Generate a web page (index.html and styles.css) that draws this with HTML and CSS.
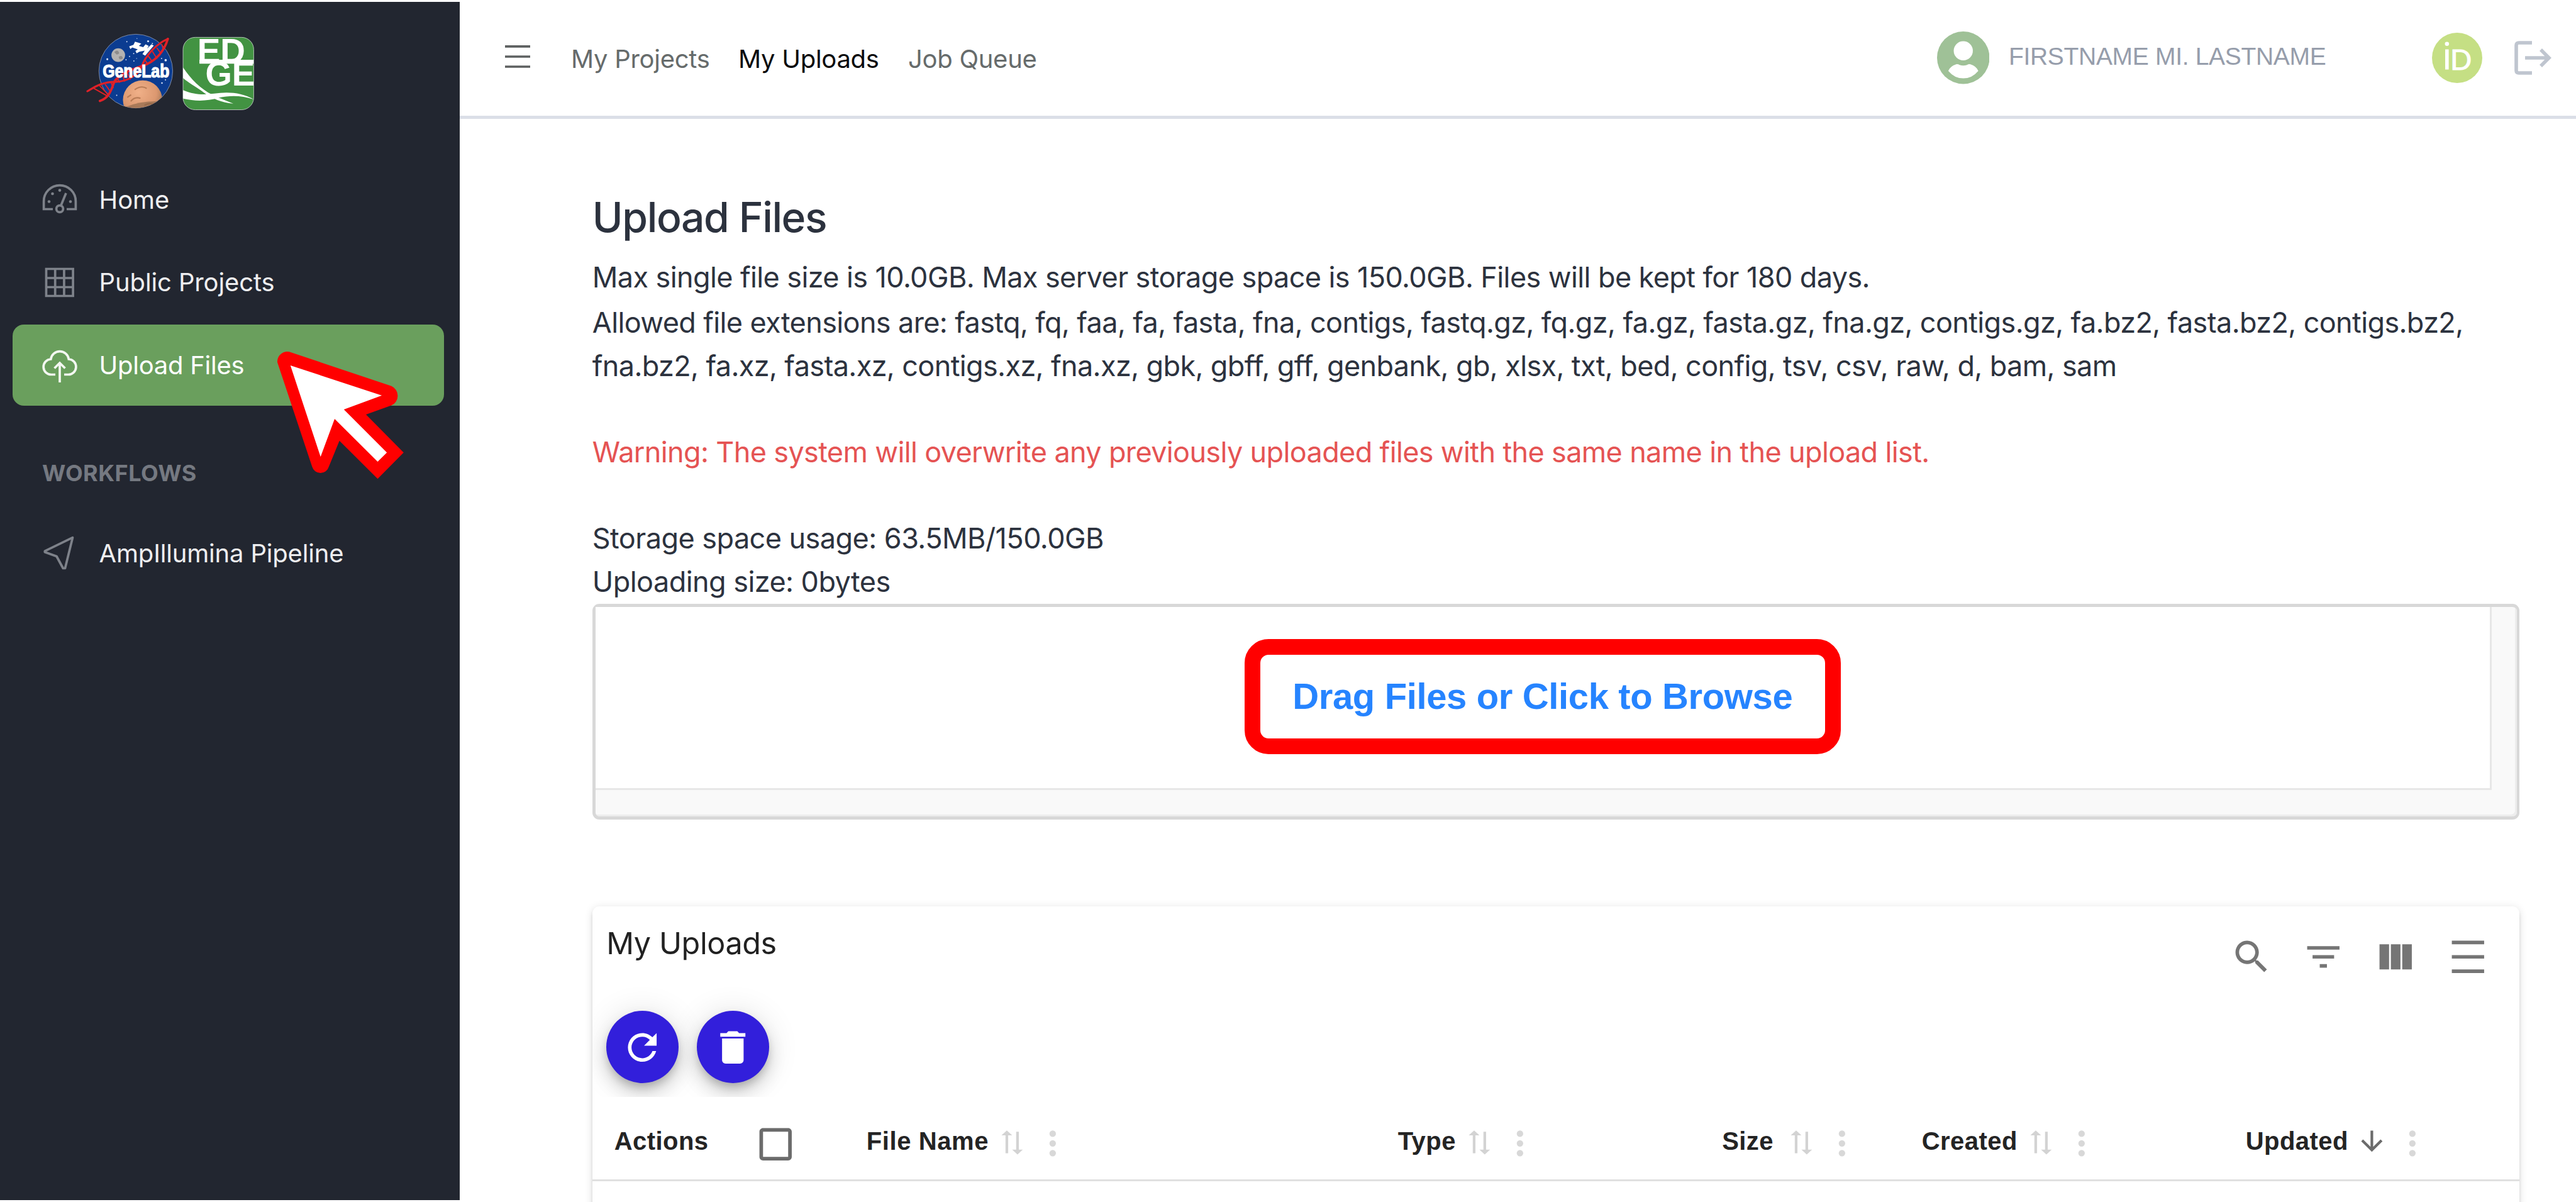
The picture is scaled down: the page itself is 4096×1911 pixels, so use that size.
FILE: index.html
```html
<!DOCTYPE html>
<html lang="en">
<head>
<meta charset="utf-8">
<title>Upload Files</title>
<link rel="stylesheet" href="styles.css">
</head>
<body>
<svg class="defs" aria-hidden="true">
  <symbol id="sort" viewBox="0 0 24 24"><g transform="rotate(-90 12 12)"><path transform="translate(12 12) scale(.9 1) translate(-12 -12)" d="m18 12 4-4-4-4v3H3v2h15zM6 12l-4 4 4 4v-3h15v-2H6z"/></g></symbol>
  <symbol id="dots" viewBox="0 0 24 24"><circle cx="12" cy="6" r="2"/><circle cx="12" cy="12" r="2"/><circle cx="12" cy="18" r="2"/></symbol>
</svg>
<div class="app">
  <aside class="sidebar">
    <div class="brand">
      <svg class="logos" viewBox="0 0 990 480">
        <defs>
          <clipPath id="disc"><circle cx="306" cy="245" r="189"/></clipPath>
          <clipPath id="tile"><rect x="548" y="72" width="362" height="371" rx="62"/></clipPath>
          <radialGradient id="mars" cx=".4" cy=".3" r=".75"><stop offset="0" stop-color="#f0b088"/><stop offset=".6" stop-color="#dc9870"/><stop offset="1" stop-color="#8e6a4c"/></radialGradient>
        </defs>
        <circle cx="306" cy="245" r="189" fill="#0b3c91" stroke="#8790a6" stroke-width="3"/>
        <g clip-path="url(#disc)"><circle cx="341" cy="393" r="101" fill="url(#mars)"/><path d="M280 400q20-26 50-16M300 340q36-24 62-6M350 420q30-18 60 0M262 380l20-14" stroke="#b87b55" stroke-width="7" fill="none"/><path d="M250 430q80-34 190-30v50H250z" fill="#7c5c42" opacity=".55"/></g>
        <circle cx="216" cy="163" r="35" fill="#b4b2b1"/><path d="M196 148q14-14 22-2t-10 14zM218 172q16-10 20 2t-16 10z" fill="#8d8b8a"/>
        <g fill="#dfe8fb"><circle cx="160" cy="184" r="5"/><circle cx="260" cy="94" r="3"/><circle cx="312" cy="78" r="2"/><circle cx="369" cy="92" r="5"/><circle cx="391" cy="104" r="3"/><circle cx="256" cy="187" r="3"/><circle cx="295" cy="155" r="3"/><circle cx="274" cy="170" r="3"/><circle cx="296" cy="193" r="3"/><circle cx="459" cy="189" r="6"/><circle cx="438" cy="180" r="3"/><circle cx="208" cy="369" r="3"/><circle cx="440" cy="306" r="4"/><circle cx="458" cy="290" r="3"/><circle cx="310" cy="180" r="2"/></g>
        <g fill="#fff"><path d="M272 118l22-8 8-16 32 10-12 12 22 6 12-14 16 8-8 14 22-22 12 6-44 52-14-8 12-18-28 6-14 8-6-12 12-8-28-10-10 8z"/></g>
        <g fill="none" stroke="#e02128" stroke-linecap="round"><path d="M470 80C400 110 350 180 338 218S270 300 200 300 90 330 58 348" stroke-width="10"/><path d="M470 80C450 150 400 200 340 218S210 270 196 300 176 380 122 398" stroke-width="12"/><path d="M440 110l6 20M415 128l18 24M392 146l22 34M370 168l20 28M354 190l14 20M320 226l8 14M290 236l18 24M262 250l16 36M238 262l10 34M212 282l10 20M180 306l10 24M150 314l26 36M122 322l40 40M92 334l64 36" stroke-width="6"/></g>
        <text class="logo-gene" x="136" y="278" textLength="342" lengthAdjust="spacingAndGlyphs">GeneLab</text>
        <rect x="548" y="72" width="362" height="371" rx="62" fill="#429342" stroke="#b9c9bb" stroke-width="3"/>
        <g clip-path="url(#tile)" fill="#fff">
          <path d="M548 226c40 60 90 110 150 140 34 18 70 30 108 46-60-6-110-26-150-56-44-34-82-52-108-76z"/>
          <path d="M548 342c60 26 110 24 160 18 70-10 140-6 202 30-60-20-120-22-180-8-60 18-120 18-182 4z"/>
          <text class="logo-edge" x="621" y="202" textLength="246" lengthAdjust="spacingAndGlyphs">ED</text>
          <rect x="632" y="187" width="278" height="20"/>
          <text class="logo-edge" x="662" y="320" textLength="254" lengthAdjust="spacingAndGlyphs">GE</text>
        </g>
      </svg>
    </div>
    <nav class="menu">
      <a class="item">
        <svg class="mi" viewBox="0 0 60 60"><path d="M19 45.500H4.600V33a25.400 25.400 0 0 1 50.800 0v12.500H41"/><circle cx="30" cy="45" r="5.400"/><path d="M32 39.500L40 20"/><g class="fill"><circle cx="30" cy="15.600" r="2.300"/><circle cx="18.500" cy="21" r="2.300"/><circle cx="13" cy="33.500" r="2.300"/><circle cx="47" cy="33.500" r="2.300"/></g></svg>
        <span>Home</span></a>
      <a class="item">
        <svg class="mi" viewBox="0 0 60 60"><path d="M8.500 8.500h42.600v43H8.500zM22.700 8.500v43M36.900 8.500v43M8.500 23h42.600M8.500 37.500h42.600"/></svg>
        <span>Public Projects</span></a>
      <a class="item active">
        <svg class="mi" viewBox="0 0 60 60"><path d="M23 44.500H17A12.200 12.200 0 0 1 15.800 20a14.400 14.400 0 0 1 28.500 0A12.200 12.200 0 0 1 43 44.500h-6M30 57V26M21.500 34.500L30 26l8.500 8.500"/></svg>
        <span class="tight">Upload Files</span></a>
    </nav>
    <div class="section">WORKFLOWS</div>
    <nav class="menu">
      <a class="item">
        <svg class="mi" viewBox="0 0 60 60"><path d="M50.500 5.700L38.500 54.500h-3.200L25 35.500 6.300 28.700v-1.500z" stroke-linejoin="round"/></svg>
        <span class="snug">AmpIllumina Pipeline</span></a>
    </nav>
  </aside>

  <main class="main">
    <header class="topbar">
      <svg class="burger" viewBox="0 0 40 36"><path d="M0 1.900h40M0 18h40M0 34h40"/></svg>
      <a class="link">My Projects</a>
      <a class="link current">My Uploads</a>
      <a class="link">Job Queue</a>
      <div class="user">
        <svg class="avatar" viewBox="0 0 84 84"><circle cx="42" cy="42" r="42" fill="#9fc197"/><circle cx="42" cy="31" r="15.300" fill="#fff"/><path d="M30.500 52.500q3.500-.4 5.500 1 6 2 12 0 2-1.400 5.500-1Q63 55.500 66 63 56 75 42 75T18 63q3-7.500 12.500-10.500z" fill="#fff"/></svg>
        <span class="name">FIRSTNAME MI. LASTNAME</span>
        <svg class="orcid" viewBox="0 0 80 80"><circle cx="40" cy="40" r="40" fill="#c5df84"/><circle cx="23.800" cy="17.800" r="3.300" fill="#fff"/><rect x="21" y="26.500" width="5.600" height="32" fill="#fff"/><text class="orcid-d" x="29" y="58.500">D</text></svg>
        <svg class="logout" viewBox="0 0 60 54"><path d="M29 3H8Q4 3 4 7v40q0 4 4 4h21" /><path d="M18 27h38M43 14l13 13-13 13"/></svg>
      </div>
    </header>

    <section class="content">
      <h1>Upload Files</h1>
      <p class="info first">Max single file size is 10.0GB. Max server storage space is 150.0GB. Files will be kept for 180 days.</p>
      <p class="info types">Allowed file extensions are: fastq, fq, faa, fa, fasta, fna, contigs, fastq.gz, fq.gz, fa.gz, fasta.gz, fna.gz, contigs.gz, fa.bz2, fasta.bz2, contigs.bz2,<br>fna.bz2, fa.xz, fasta.xz, contigs.xz, fna.xz, gbk, gbff, gff, genbank, gb, xlsx, txt, bed, config, tsv, csv, raw, d, bam, sam</p>
      <p class="info warning">Warning: The system will overwrite any previously uploaded files with the same name in the upload list.</p>
      <p class="info usage">Storage space usage: 63.5MB/150.0GB<br>Uploading size: 0bytes</p>

      <div class="dropzone"><div class="drop-inner"><div class="callout">Drag Files or Click to Browse</div></div></div>

      <div class="card">
        <div class="toolbar">
          <div class="toolbar-left">
            <h2>My Uploads</h2>
            <div class="actions">
              <button class="fab"><svg class="ic" viewBox="0 0 24 24"><path d="M17.650 6.350C16.200 4.900 14.210 4 12 4c-4.420 0-7.990 3.580-7.990 8s3.570 8 7.990 8c3.730 0 6.840-2.550 7.730-6h-2.080c-.82 2.330-3.040 4-5.650 4-3.310 0-6-2.690-6-6s2.690-6 6-6c1.660 0 3.140.69 4.220 1.780L13 11h7V4l-2.350 2.350z"/></svg></button>
              <button class="fab"><svg class="ic" viewBox="0 0 24 24"><path d="M6 19c0 1.100.9 2 2 2h8c1.100 0 2-.9 2-2V7H6v12zM19 4h-3.500l-1-1h-5l-1 1H5v2h14V4z"/></svg></button>
            </div>
          </div>
          <div class="tools">
            <svg class="ic" viewBox="0 0 24 24"><path d="M15.500 14h-.79l-.28-.27C15.410 12.590 16 11.110 16 9.500 16 5.910 13.090 3 9.500 3S3 5.910 3 9.500 5.910 16 9.500 16c1.610 0 3.090-.59 4.230-1.570l.27.28v.79l5 4.990L20.490 19l-4.990-5zm-6 0C7.010 14 5 11.990 5 9.500S7.010 5 9.500 5 14 7.010 14 9.500 11.990 14 9.500 14z"/></svg>
            <svg class="ic" viewBox="0 0 24 24"><path d="M10 18h4v-2h-4v2zM3 6v2h18V6H3zm3 7h12v-2H6v2z"/></svg>
            <svg class="ic" viewBox="0 0 24 24"><path d="M14.670 5v14H9.330V5h5.340zm1 14H21V5h-5.330v14zm-7.340 0V5H3v14h5.330z"/></svg>
            <svg class="ic" viewBox="0 0 24 24"><path d="M3 3h18v2H3zm0 16h18v2H3zm0-8h18v2H3z"/></svg>
          </div>
        </div>
        <div class="thead">
          <div class="th">Actions</div>
          <div class="th"><svg class="ic check" viewBox="0 0 24 24"><path d="M19 5v14H5V5h14m0-2H5c-1.100 0-2 .9-2 2v14c0 1.100.9 2 2 2h14c1.100 0 2-.9 2-2V5c0-1.100-.9-2-2-2z"/></svg></div>
          <div class="th file">File Name<svg class="sort"><use href="#sort"/></svg><svg class="dots"><use href="#dots"/></svg></div>
          <div class="th">Type<svg class="sort"><use href="#sort"/></svg><svg class="dots"><use href="#dots"/></svg></div>
          <div class="th size">Size<svg class="sort"><use href="#sort"/></svg><svg class="dots"><use href="#dots"/></svg></div>
          <div class="th">Created<svg class="sort"><use href="#sort"/></svg><svg class="dots"><use href="#dots"/></svg></div>
          <div class="th">Updated<svg class="sort down" viewBox="0 0 24 24"><path d="M20 12l-1.410-1.410L13 16.170V4h-2v12.170l-5.580-5.590L4 12l8 8 8-8z"/></svg><svg class="dots"><use href="#dots"/></svg></div>
        </div>
      </div>
    </section>
  </main>

  <svg class="pointer" viewBox="465 595 235 230">
    <path fill="#f00" d="M473.500 618.300A17 17 0 0 1 497 601.700L668.400 659.300A18 18 0 0 1 668.400 692.300L625 707.700 689.300 772.700 644.900 817.700 579.600 752.700 561.500 797A14.800 14.800 0 0 1 533 797z"/>
    <path fill="#fff" d="M495.900 624L652 675.300 587.200 699.300 660.700 772.700 644.900 788.300 571.400 715.300 547.400 780z"/>
  </svg>
</div>
</body>
</html>
```
FILE: styles.css
```css
* { box-sizing: border-box; }

body {
  margin: 0;
  background: #fff;
  font-family: "Inter", "Noto Sans", sans-serif;
  color: #2c323e;
}

h1, h2, p { margin: 0; }
svg { display: block; flex: none; }
.defs { position: absolute; width: 0; height: 0; }

.app {
  position: relative;
  display: flex;
  width: 4096px;
  height: 1911px;
  padding: 3px 0;
  overflow: hidden;
}

/* Sidebar */
.sidebar {
  flex: none;
  width: 731px;
  padding: 0 25.500px 0 20px;
  background: #222630;
}
.brand { height: 249.300px; padding: 34.200px 0 0 101px; }
.logos { width: 307.200px; height: 149px; }
.logo-gene { font: 700 93px "Liberation Sans", sans-serif; fill: #fff; stroke: #fff; stroke-width: 4px; }
.logo-edge { font: 700 176px "Liberation Sans", sans-serif; }

.menu { display: flex; flex-direction: column; gap: 2.700px; }
.item {
  display: flex;
  align-items: center;
  height: 129px;
  padding: 1px 0 0 44.600px;
  border-radius: 18px;
  font-size: 40px;
  line-height: 60px;
  color: #eeeef0;
}
.item.active { background: #6a9f5d; color: #fff; }
.item span { margin: 1px 0 0 33px; letter-spacing: -.12px; white-space: nowrap; }
.item .tight { letter-spacing: -.27px; }
.item .snug { letter-spacing: -.18px; }
.mi {
  width: 60px;
  height: 60px;
  fill: none;
  stroke: #7e828a;
  stroke-width: 3.700px;
}
.mi .fill { fill: #7e828a; stroke: none; }
.active .mi { stroke: #f3f7f1; }
.section {
  height: 100px;
  margin: 57px 0 12.400px;
  padding-left: 47px;
  font-size: 36px;
  font-weight: 700;
  line-height: 100px;
  letter-spacing: .45px;
  color: #757981;
}

/* Top bar */
.main { flex: 1; min-width: 0; }
.topbar {
  display: flex;
  align-items: center;
  height: 186px;
  padding: 0 39.500px 0 72px;
  border-bottom: 5.600px solid #dbdfe7;
}
.burger { width: 40px; height: 36px; margin: -8px 65px 0 0; stroke: #5d6060; stroke-width: 3.700px; }
.link {
  flex: none;
  width: 266px;
  font-size: 40px;
  line-height: 60px;
  letter-spacing: -.28px;
  color: #666b6b;
}
.link.current { width: 270px; color: #0a0a0c; }
.user { display: flex; align-items: center; margin-left: auto; }
.avatar { width: 83.500px; height: 83.500px; margin: -3px 31px 0 0; }
.name {
  width: 672.500px;
  margin-top: -7px;
  font: 400 39px/60px "Liberation Sans", sans-serif;
  letter-spacing: -.32px;
  color: #969dab;
}
.orcid { width: 80px; height: 80px; margin-top: -3px; }
.orcid-d { font: 400 45px Lato, sans-serif; fill: #fff; stroke: #fff; stroke-width: 1px; }
.logout { width: 60px; height: 54px; margin: -3px 0 0 50px; fill: none; stroke: #bfc5cf; stroke-width: 5.600px; }

/* Content */
.content { width: 3275px; padding: 116px 0 0 210.800px; }
h1 {
  margin-bottom: 22.100px;
  font-size: 66px;
  font-weight: 500;
  line-height: 80px;
  letter-spacing: -1.400px;
}
.info { font-size: 45px; line-height: 68.700px; white-space: nowrap; }
.first { margin-bottom: 3px; letter-spacing: -.6px; }
.types { margin-bottom: 68.700px; letter-spacing: -.625px; }
.warning { margin-bottom: 68.700px; letter-spacing: -.64px; color: #e55353; }
.usage { letter-spacing: -.55px; }

.dropzone {
  width: 3064px;
  height: 343.500px;
  border: 5.600px solid #d8d8d8;
  border-right-width: 4px;
  border-radius: 11px;
  padding: 0 40px 42px 0;
  background: #f9f9f9;
  box-shadow: inset -3px -3px 0 #ededed;
}
.drop-inner {
  display: flex;
  justify-content: center;
  height: 100%;
  padding: 51px 0 0 0;
  border: solid #e7e7e7;
  border-width: 0 3px 3px 0;
  background: #fff;
}
.callout {
  width: 948px;
  height: 183px;
  border: 25px solid #f00;
  border-radius: 38px;
  font: 700 58px/132px "Liberation Sans", sans-serif;
  letter-spacing: -.37px;
  text-align: center;
  color: #2684ff;
}

.card {
  width: 3064.600px;
  height: 520px;
  margin-top: 137.500px;
  border-radius: 11px;
  background: #fff;
  box-shadow: 0 8.600px 2.900px -5.700px rgba(0,0,0,.2), 0 5.700px 5.700px rgba(0,0,0,.12), 0 2.900px 14.300px rgba(0,0,0,.12);
}
.toolbar {
  display: flex;
  justify-content: space-between;
  height: 303.800px;
  padding-right: 48px;
  overflow: hidden;
}
.toolbar-left { padding: 29.600px 0 0 22.400px; }
h2 {
  font-size: 48.500px;
  font-weight: 400;
  line-height: 60px;
  letter-spacing: -.4px;
  color: #212121;
}
.actions { display: flex; gap: 28.500px; margin-top: 77px; }
.fab {
  display: flex;
  align-items: center;
  justify-content: center;
  width: 115px;
  height: 115px;
  padding: 0;
  border: 0;
  border-radius: 50%;
  background: #321fdb;
  color: #fff;
  box-shadow: 0 8.600px 14.300px -2.900px rgba(0,0,0,.2), 0 17px 28.500px rgba(0,0,0,.14), 0 2.900px 51px rgba(0,0,0,.12);
}
.fab, .tools { fill: currentColor; }
.ic { width: 68.500px; height: 68.500px; }
.tools { display: flex; gap: 46.300px; padding-top: 46.300px; color: #757575; }

.thead {
  display: grid;
  grid-template-columns: 222.600px 178.400px 845px 515.500px 317.500px 515px 1fr;
  height: 133.600px;
  padding: 8.500px 0 0 34.900px;
  border-bottom: 3px solid #e0e0e0;
}
.th {
  display: flex;
  align-items: center;
  font: 700 40px/60px "Liberation Sans", sans-serif;
  letter-spacing: .45px;
  color: #242424;
}
.th.file { letter-spacing: .6px; }
.sort { width: 50.800px; height: 50.800px; margin: 4px 0 0 12px; fill: #d3d3d3; }
.sort.down { margin-top: 0; fill: #6b6b6b; }
.size .sort { margin-left: 18.500px; }
.dots { width: 61.700px; height: 61.700px; margin: 7.600px 0 0 8.300px; fill: #d8d8d8; }
.check { margin-top: 11.400px; fill: #6b6b6b; }

/* Mouse pointer lying over the menu */
.pointer { position: absolute; left: 433px; top: 554px; width: 218.800px; height: 214.100px; }
```
